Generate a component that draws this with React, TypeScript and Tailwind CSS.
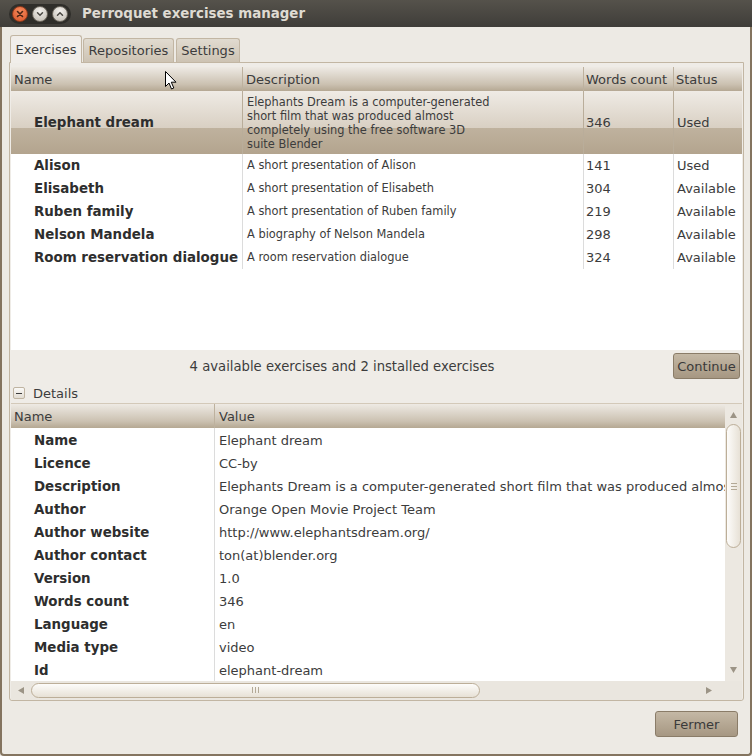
import React from "react";

const upperRows = [
  { name: "Alison", desc: "A short presentation of Alison", count: "141", status: "Used" },
  { name: "Elisabeth", desc: "A short presentation of Elisabeth", count: "304", status: "Available" },
  { name: "Ruben family", desc: "A short presentation of Ruben family", count: "219", status: "Available" },
  { name: "Nelson Mandela", desc: "A biography of Nelson Mandela", count: "298", status: "Available" },
  { name: "Room reservation dialogue", desc: "A room reservation dialogue", count: "324", status: "Available" },
];

const details = [
  ["Name", "Elephant dream"],
  ["Licence", "CC-by"],
  ["Description", "Elephants Dream is a computer-generated short film that was produced almost completely using the free software 3D suite Blender"],
  ["Author", "Orange Open Movie Project Team"],
  ["Author website", "http://www.elephantsdream.org/"],
  ["Author contact", "ton(at)blender.org"],
  ["Version", "1.0"],
  ["Words count", "346"],
  ["Language", "en"],
  ["Media type", "video"],
  ["Id", "elephant-dream"],
];

function Tri({ dir }: { dir: "up" | "down" | "left" | "right" }) {
  const pts =
    dir === "up" ? "0,6 3.5,0 7,6" : dir === "down" ? "0,0 7,0 3.5,6" : dir === "left" ? "6,0 6,7 0,3.5" : "0,0 0,7 6,3.5";
  const w = dir === "up" || dir === "down" ? 7 : 6;
  const h = dir === "up" || dir === "down" ? 6 : 7;
  return (
    <svg width={w} height={h} viewBox={`0 0 ${w} ${h}`}>
      <polygon points={pts} fill="#9c9486" />
    </svg>
  );
}

export default function App() {
  return (
    <div className="w-[752px] h-[756px] bg-[#edeae4] flex flex-col overflow-hidden font-['DejaVu_Sans',sans-serif] text-[13px] text-[#3c3c3c] relative">
      {/* Title bar */}
      <div className="h-[27px] shrink-0 flex items-center bg-[linear-gradient(to_bottom,#55524b,#3f3d39)]">
        <div className="ml-[9px] h-[20px] w-[62px] rounded-full bg-[#2f2e2a] flex items-center gap-[4px] pl-[3px]">
          <div className="w-[16px] h-[16px] rounded-full bg-[radial-gradient(circle_at_50%_30%,#f58a5c,#d9552a)] border border-[#8f3a1c] flex items-center justify-center">
            <svg width="8" height="8" viewBox="0 0 8 8">
              <path d="M1.5 1.5 L6.5 6.5 M6.5 1.5 L1.5 6.5" stroke="#4a2414" strokeWidth="1.6" strokeLinecap="round" />
            </svg>
          </div>
          <div className="w-[16px] h-[16px] rounded-full bg-[radial-gradient(circle_at_50%_30%,#f4f2ee,#bdb8ae)] border border-[#6f6a61] flex items-center justify-center">
            <svg width="8" height="8" viewBox="0 0 8 8">
              <path d="M1.5 2.8 L4 5.3 L6.5 2.8" stroke="#4a4843" strokeWidth="1.5" fill="none" strokeLinecap="round" />
            </svg>
          </div>
          <div className="w-[16px] h-[16px] rounded-full bg-[radial-gradient(circle_at_50%_30%,#f4f2ee,#bdb8ae)] border border-[#6f6a61] flex items-center justify-center">
            <svg width="8" height="8" viewBox="0 0 8 8">
              <path d="M1.5 5.2 L4 2.7 L6.5 5.2" stroke="#4a4843" strokeWidth="1.5" fill="none" strokeLinecap="round" />
            </svg>
          </div>
        </div>
        <div className="ml-[11px] font-bold text-[13.4px] text-[#dfdbd2] leading-none">Perroquet exercises manager</div>
      </div>

      {/* Window body */}
      <div className="flex-1 flex flex-col border-l-[2px] border-r-[2px] border-b-[2px] border-[#84745f] rounded-b-[4px]">
        {/* Tabs */}
        <div className="mt-[8px] ml-[8px] h-[27px] flex items-end shrink-0">
          <div className="relative z-10 w-[72px] h-[28px] -mb-px border border-b-0 border-[#c2b6a3] rounded-t-[3px] bg-[#f1eeea] flex items-center justify-center">
            Exercises
          </div>
          <div className="ml-[1px] w-[91px] h-[24px] border border-b-0 border-[#c2b6a3] rounded-t-[3px] bg-[linear-gradient(to_bottom,#e1dbd0,#cdc3b3)] flex items-center justify-center pt-[1px]">
            Repositories
          </div>
          <div className="ml-[2px] w-[64px] h-[24px] border border-b-0 border-[#c2b6a3] rounded-t-[3px] bg-[linear-gradient(to_bottom,#e1dbd0,#cdc3b3)] flex items-center justify-center pt-[1px]">
            Settings
          </div>
        </div>

        {/* Notebook page */}
        <div className="ml-[7px] w-[735px] h-[639px] shrink-0 border border-[#c2b6a3] rounded-b-[3px] bg-[#efece7] flex flex-col px-[1px] pt-[4px]">
          {/* Upper table */}
          <div className="h-[283px] shrink-0 bg-white flex flex-col">
            <div className="h-[24px] shrink-0 grid grid-cols-[231px_341px_90px_1fr] bg-[linear-gradient(to_bottom,#eeeae4,#cbc1b1_72%,#b5a893)]">
              <div className="pl-[3px] pt-[2px] flex items-center">Name</div>
              <div className="pl-[3px] pt-[2px] flex items-center border-l border-[#bdb19e]">Description</div>
              <div className="pl-[2px] pt-[2px] flex items-center border-l border-[#bdb19e]">Words count</div>
              <div className="pl-[2px] pt-[2px] flex items-center border-l border-[#bdb19e]">Status</div>
            </div>
            {/* Selected row */}
            <div className="h-[63px] shrink-0 grid grid-cols-[231px_341px_90px_1fr] bg-[linear-gradient(to_bottom,#efebe5_0%,#d9d0c3_58%,#bfb29e_59%,#b3a48e_100%)]">
              <div className="pl-[23px] pt-[2px] flex items-center font-bold text-[13.4px] text-[#2e2e2e]">Elephant dream</div>
              <div className="pl-[4px] flex flex-col justify-center border-l border-[#b9ad9a] text-[11.4px] leading-[14px]">
                <span>Elephants Dream is a computer-generated</span>
                <span>short film that was produced almost</span>
                <span>completely using the free software 3D</span>
                <span>suite Blender</span>
              </div>
              <div className="pl-[2px] flex items-center border-l border-[#b9ad9a]">346</div>
              <div className="pl-[3px] flex items-center border-l border-[#b9ad9a]">Used</div>
            </div>
            {upperRows.map((r) => (
              <div key={r.name} className="h-[23px] shrink-0 grid grid-cols-[231px_341px_90px_1fr]">
                <div className="pl-[23px] pt-[2px] flex items-center font-bold text-[13.4px] text-[#2e2e2e] whitespace-nowrap">{r.name}</div>
                <div className="pl-[4px] pt-[1px] flex items-center border-l border-[#dcdcdc] text-[11.4px]">{r.desc}</div>
                <div className="pl-[2px] flex items-center border-l border-[#dcdcdc]">{r.count}</div>
                <div className="pl-[3px] flex items-center border-l border-[#dcdcdc]">{r.status}</div>
              </div>
            ))}
          </div>

          {/* Status row */}
          <div className="h-[32px] shrink-0 flex items-center">
            <div className="flex-1 text-center pt-[2px] text-[13.2px]">4 available exercises and 2 installed exercises</div>
            <div className="mr-[2px] w-[67px] h-[26px] rounded-[3px] border border-[#8a7c68] bg-[linear-gradient(to_bottom,#c4b8a5,#a69782)] flex items-center justify-center text-[#3a3a3a] pt-[1px]">
              Continue
            </div>
          </div>

          {/* Expander */}
          <div className="h-[21px] shrink-0 flex items-center pl-[2px] pt-[1px]">
            <div className="w-[12px] h-[12px] rounded-[2px] border border-[#bfb4a2] bg-[linear-gradient(to_bottom,#faf9f7,#e2dcd2)] flex items-center justify-center">
              <div className="w-[6px] h-[1px] bg-[#3c3c3c]" />
            </div>
            <div className="ml-[8px] pt-[1px]">Details</div>
          </div>

          {/* Details scrolled window */}
          <div className="flex-1 flex flex-col border-t border-[#d3c9b9] bg-[#eae6df]">
            <div className="flex h-[277px] shrink-0">
              <div className="w-[714px] bg-white flex flex-col overflow-hidden">
                <div className="h-[24px] shrink-0 grid grid-cols-[203px_1fr] bg-[linear-gradient(to_bottom,#eeeae4,#cbc1b1_72%,#b5a893)]">
                  <div className="pl-[3px] pt-[2px] flex items-center">Name</div>
                  <div className="pl-[4px] pt-[2px] flex items-center border-l border-[#bdb19e]">Value</div>
                </div>
                {details.map(([k, v]) => (
                  <div key={k} className="h-[23px] shrink-0 grid grid-cols-[203px_511px]">
                    <div className="pl-[23px] pt-[3px] flex items-center font-bold text-[13.4px] text-[#2e2e2e]">{k}</div>
                    <div className="pl-[4px] pt-[2px] flex items-center border-l border-[#dcdcdc] whitespace-nowrap overflow-hidden">{v}</div>
                  </div>
                ))}
              </div>
              {/* Vertical scrollbar */}
              <div className="w-[17px] flex flex-col items-center bg-[#ece8e1]">
                <div className="h-[20px] flex items-center justify-center pt-[1px]">
                  <Tri dir="up" />
                </div>
                <div className="w-[15px] h-[124px] rounded-full border border-[#bcae98] bg-[linear-gradient(to_right,#fdfcfa,#e7e1d6)] flex items-center justify-center">
                  <div className="flex flex-col gap-[2px]">
                    <div className="w-[6px] h-[1px] bg-[#b3a996]" />
                    <div className="w-[6px] h-[1px] bg-[#b3a996]" />
                    <div className="w-[6px] h-[1px] bg-[#b3a996]" />
                  </div>
                </div>
                <div className="flex-1" />
                <div className="h-[14px] flex items-start justify-center">
                  <Tri dir="down" />
                </div>
              </div>
            </div>
            {/* Horizontal scrollbar */}
            <div className="h-[18px] shrink-0 flex items-center">
              <div className="w-[714px] h-full flex items-center">
                <div className="w-[20px] flex justify-center">
                  <Tri dir="left" />
                </div>
                <div className="w-[449px] h-[15px] rounded-full border border-[#bcae98] bg-[linear-gradient(to_bottom,#fdfcfa,#e7e1d6)] flex items-center justify-center">
                  <div className="flex gap-[2px]">
                    <div className="w-[1px] h-[6px] bg-[#b3a996]" />
                    <div className="w-[1px] h-[6px] bg-[#b3a996]" />
                    <div className="w-[1px] h-[6px] bg-[#b3a996]" />
                  </div>
                </div>
                <div className="flex-1" />
                <div className="w-[20px] flex justify-center mr-[6px]">
                  <Tri dir="right" />
                </div>
              </div>
            </div>
          </div>
        </div>

        {/* Bottom button */}
        <div className="mt-[10px] flex justify-end">
          <div className="mr-[12px] w-[83px] h-[26px] rounded-[3px] border border-[#8a7c68] bg-[linear-gradient(to_bottom,#c4b8a5,#a69782)] flex items-center justify-center text-[#3a3a3a] pt-[1px]">
            Fermer
          </div>
        </div>
      </div>

      {/* Mouse cursor */}
      <svg className="absolute left-[165px] top-[71px]" width="12" height="19" viewBox="0 0 12 19">
        <path d="M0.5 0.5 L0.5 15.5 L4 12 L6.5 18 L8.8 17 L6.3 11.2 L11 11.2 Z" fill="#fff" stroke="#000" strokeWidth="1" />
      </svg>
    </div>
  );
}
